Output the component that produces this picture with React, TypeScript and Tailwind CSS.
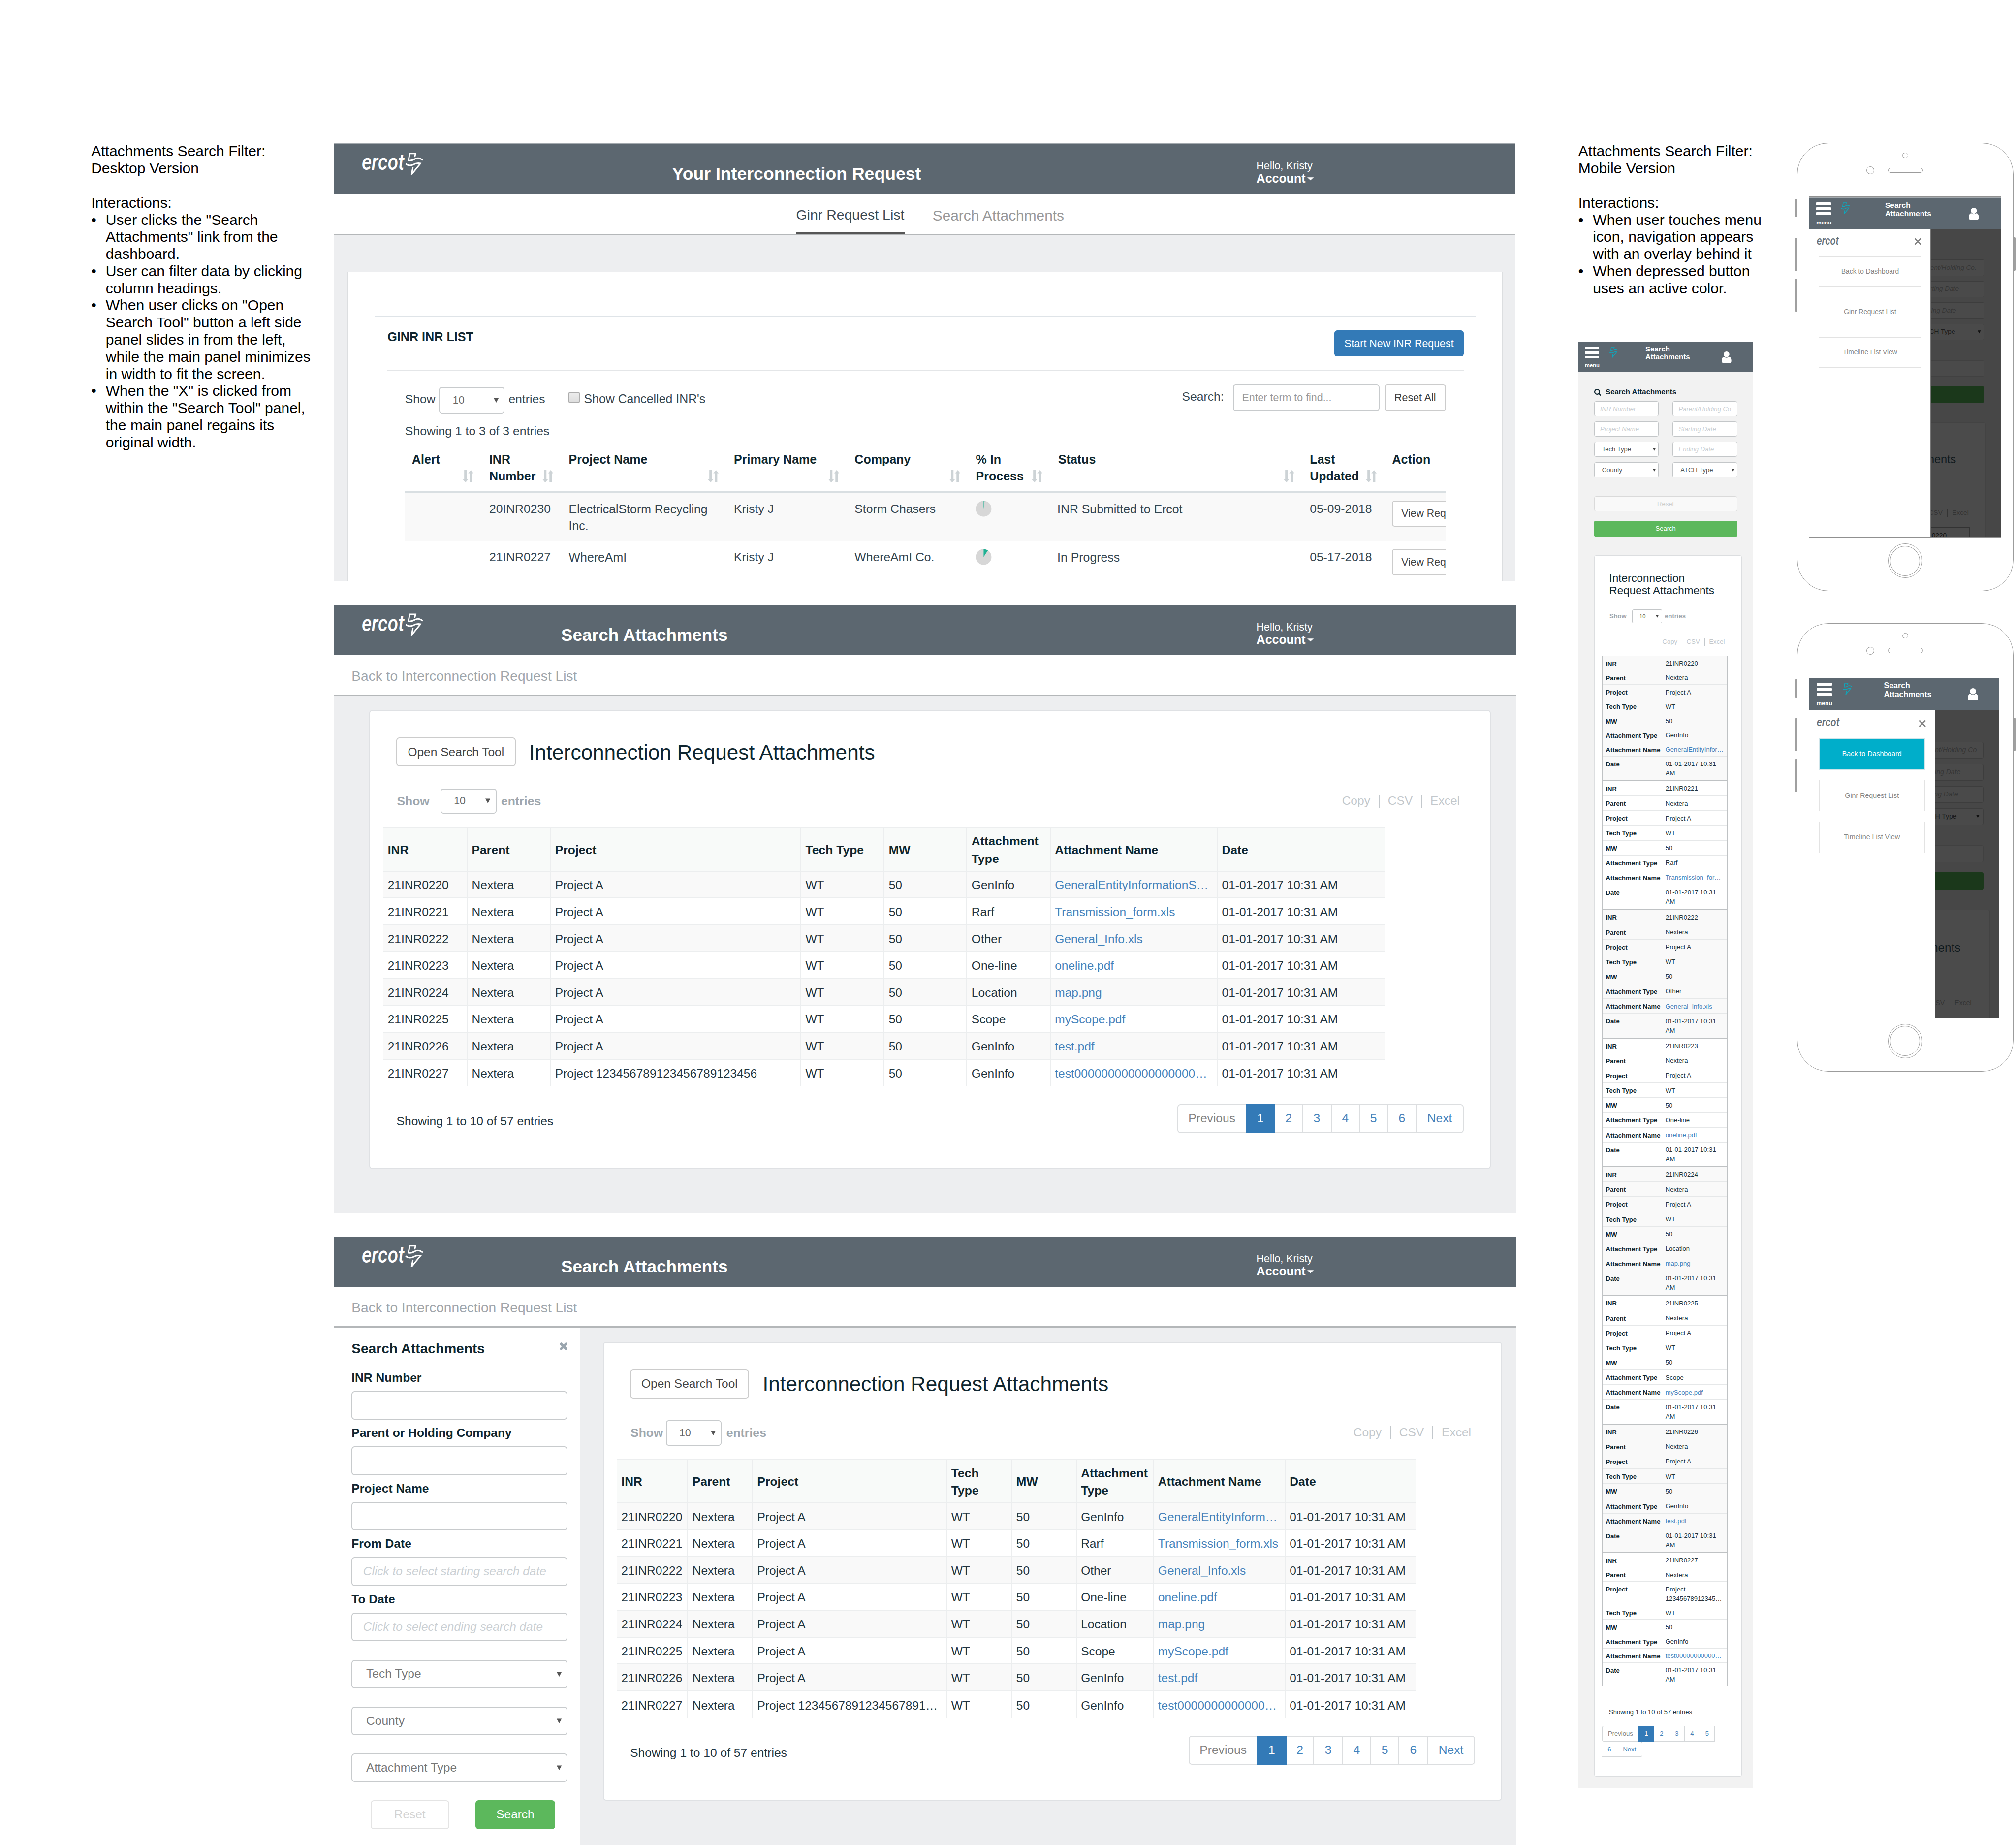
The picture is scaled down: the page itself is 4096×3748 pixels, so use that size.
import React from "react";

type Cls = { className?: string };

/* ---------- icons ---------- */

const Arrow = ({ className = "" }: Cls) => (
  <svg viewBox="0 0 12 12" className={`shrink-0 ${className}`} preserveAspectRatio="none">
    <path d="M0 0.5H12L6 11.5Z" fill="currentColor" />
  </svg>
);

const ErcotMark = ({ className = "" }: Cls) => (
  <svg viewBox="320 28 118 152" className={className} fill="none" stroke="currentColor" strokeWidth="9.5">
    <path d="M382 57L388 34H350L342 79C362 83 374 75 386 68C404 59 422 66 435 77" />
    <path d="M324 100C343 116 360 113 376 105C392 95 404 95 420 98L362 170L371 124" />
  </svg>
);

const ErcotWord = ({ className = "" }: Cls) => (
  <svg viewBox="0 0 94 42" className={`shrink-0 overflow-visible ${className}`}>
    <text
      x="0"
      y="36"
      textLength="92"
      lengthAdjust="spacingAndGlyphs"
      fontFamily="Roboto, sans-serif"
      fontStyle="italic"
      fontWeight="500"
      fontSize="49"
      fill="currentColor"
    >
      ercot
    </text>
  </svg>
);

const UserIcon = ({ className = "" }: Cls) => (
  <svg viewBox="0 128 1280 1536" className={className} fill="currentColor">
    <path d="M1280 1399q0 109-62.5 187t-150.5 78h-854q-88 0-150.5-78t-62.5-187q0-85 8.5-160.5t31.5-152 58.5-131 94-89 134.5-34.5q131 128 313 128t313-128q76 0 134.5 34.5t94 89 58.5 131 31.5 152 8.5 160.5zm-256-887q0 159-112.5 271.5t-271.5 112.5-271.5-112.5-112.5-271.5 112.5-271.5 271.5-112.5 271.5 112.5 112.5 271.5z" />
  </svg>
);

const TimesIcon = ({ className = "" }: Cls) => (
  <svg viewBox="302 366 1188 1188" className={className} fill="currentColor">
    <path d="M1490 1322q0 40-28 68l-136 136q-28 28-68 28t-68-28l-294-294-294 294q-28 28-68 28t-68-28l-136-136q-28-28-28-68t28-68l294-294-294-294q-28-28-28-68t28-68l136-136q28-28 68-28t68 28l294 294 294-294q28-28 68-28t68 28l136 136q28 28 28 68t-28 68l-294 294 294 294q28 28 28 68z" />
  </svg>
);

const SearchIcon = ({ className = "" }: Cls) => (
  <svg viewBox="64 128 1664 1664" className={className} fill="currentColor">
    <path d="M1216 832q0-185-131.5-316.5t-316.5-131.5-316.5 131.5-131.5 316.5 131.5 316.5 316.5 131.5 316.5-131.5 131.5-316.5zm512 832q0 52-38 90t-90 38q-54 0-90-38l-343-342q-179 124-399 124-143 0-273.5-55.5t-225-150-150-225-55.5-273.5 55.5-273.5 150-225 225-150 273.5-55.5 273.5 55.5 225 150 150 225 55.5 273.5q0 220-124 399l343 343q37 37 37 90z" />
  </svg>
);

const SortIcon = () => (
  <svg viewBox="0 0 24 27" className="h-[27px] w-[24px] shrink-0" fill="#cdd3d6">
    <path d="M3.4 0H8.8V20H12L6.1 27L0.4 20H3.4Z" />
    <path d="M15.2 27H20.6V7H23.6L17.9 0L12 7H15.2Z" />
  </svg>
);

const Pie = ({ wedge }: { wedge: string }) => (
  <svg viewBox="0 0 36 36" className="size-[35px]">
    <circle cx="18" cy="18" r="17.5" fill="#d7d7d7" />
    <path d={wedge} fill="#1fb193" />
  </svg>
);

/* ---------- notes ---------- */

function Notes({ title, items }: { title: string[]; items: string[][] }) {
  return (
    <div className="text-[32px] leading-[37px] whitespace-nowrap text-black">
      {title.map((t) => (
        <p key={t}>{t}</p>
      ))}
      <p className="mt-[37px]">Interactions:</p>
      <ul>
        {items.map((lines) => (
          <li key={lines[0]} className="flex">
            <span className="w-[31.5px] shrink-0">•</span>
            <div>
              {lines.map((l) => (
                <p key={l}>{l}</p>
              ))}
            </div>
          </li>
        ))}
      </ul>
    </div>
  );
}

/* ---------- desktop shared ---------- */

function Header({ title, cols, titleCls }: { title: string; cols: string; titleCls: string }) {
  return (
    <header className={`grid h-[108px] shrink-0 bg-[#5c6770] text-white ${cols}`}>
      <div className="flex pt-[9px] pl-[60px]">
        <ErcotWord className="mt-[11px] h-[42px] w-[94px]" />
        <ErcotMark className="mt-[9.3px] h-[50.6px] w-[39.3px] shrink-0" />
      </div>
      <h1 className={`leading-[44px] font-bold whitespace-nowrap ${titleCls}`}>{title}</h1>
      <div className="mt-[34px] h-[53px] w-[145px] border-r-[2.2px] border-white/90 pt-px leading-[26px] whitespace-nowrap">
        <p className="text-[22.8px]">Hello, Kristy</p>
        <p className="flex items-center text-[26.6px] font-bold">
          Account
          <Arrow className="mt-[3px] ml-[4px] h-[7px] w-[14px]" />
        </p>
      </div>
    </header>
  );
}

function Exports({ className = "", sep = "" }: Cls & { sep?: string }) {
  return (
    <div className={`flex items-center text-[#c3c8cc] ${className}`}>
      <span>Copy</span>
      <span className={`bg-[#c3c8cc] ${sep}`} />
      <span>CSV</span>
      <span className={`bg-[#c3c8cc] ${sep}`} />
      <span>Excel</span>
    </div>
  );
}

/* ---------- desktop: request list ---------- */

const listCols = "grid grid-cols-[167px_172px_357px_261px_262px_178px_544px_178px_1fr]";
const listHeads: [string[], boolean][] = [
  [["Alert"], true],
  [["INR", "Number"], true],
  [["Project Name"], true],
  [["Primary Name"], true],
  [["Company"], true],
  [["% In", "Process"], true],
  [["Status"], true],
  [["Last", "Updated"], true],
  [["Action"], false],
];
const listRows = [
  {
    inr: "20INR0230",
    project: ["ElectricalStorm Recycling", "Inc."],
    company: "Storm Chasers",
    wedge: "M18 18L18 0.5A17.5 17.5 0 0 1 20 0.7Z",
    status: "INR Submitted to Ercot",
    date: "05-09-2018",
    cls: "h-[105px] bg-[#f9f9f9] border-b-[2.2px] border-[#dfe2e4]",
  },
  {
    inr: "21INR0227",
    project: ["WhereAmI"],
    company: "WhereAmI Co.",
    wedge: "M18 18L18 0.5A17.5 17.5 0 0 1 27.5 3.3Z",
    status: "In Progress",
    date: "05-17-2018",
    cls: "h-[86px]",
  },
];

function RequestList() {
  return (
    <section className="flex h-[947.5px] w-[2553px] flex-col overflow-hidden border-t-[2.2px] border-[#a3a9ae] bg-[#edeef0]">
      <Header title="Your Interconnection Request" cols="grid-cols-[731px_1263px_1fr]" titleCls="pt-[43px] text-[37.9px]" />
      <nav className="flex h-[89px] shrink-0 border-b-[2.2px] border-[#b4b7b9] bg-white pl-[999px] leading-[40px] whitespace-nowrap">
        <span className="h-[87px] w-[235px] border-b-[6px] border-[#565656] pt-[26px] text-[30.3px] text-[#3a4a55]">
          Ginr Request List
        </span>
        <span className="ml-[60px] pt-[27px] text-[31.8px] text-[#999]">Search Attachments</span>
      </nav>
      <div className="mt-[79px] ml-[29.5px] w-[2498.5px] flex-1 border-r-[2.2px] border-l-[1px] border-[#dcdee0] bg-white pt-[95px] text-[26.3px] text-[#344550]">
        <div className="mx-[57px] border-t-[4px] border-[#dfe4e8]" />
        <div className="mr-[84px] ml-[85px] flex h-[117px] justify-between border-b-[2.2px] border-[#e4e6e8]">
          <h2 className="mt-[25px] text-[26.8px] leading-[36px] font-bold text-[#0f2630]">GINR INR LIST</h2>
          <button className="mt-[28.5px] h-[57px] w-[279px] rounded-[6px] bg-[#337ab7] text-[22.8px] text-white">
            Start New INR Request
          </button>
        </div>
        <div className="mr-[122px] ml-[123px]">
          <div className="flex items-start">
            <span className="mt-[43px] w-[74px] leading-[36px]">Show</span>
            <span className="mt-[34px] flex h-[57px] w-[141px] items-center justify-between rounded-[6px] border-[2.2px] border-[#c8cbcd] pr-[10px] pl-[27px] text-[22.8px] text-[#666]">
              10
              <Arrow className="size-[11px] text-[#555]" />
            </span>
            <span className="mt-[43px] ml-[9px] leading-[36px]">entries</span>
            <span className="mt-[45px] ml-[51px] size-[24px] rounded-[4px] border-[2.2px] border-[#adadad] bg-linear-to-b from-[#ededed] to-[#dedede]" />
            <span className="mt-[43px] ml-[9px] text-[26.5px] leading-[36px]">Show Cancelled INR's</span>
            <span className="mt-[37px] ml-auto leading-[36px]">Search:</span>
            <span className="mt-[29px] ml-[19px] flex h-[57px] w-[318px] items-center rounded-[6px] border-[2.2px] border-[#c8cbcd] pl-[18px] text-[22.8px] text-[#999]">
              Enter term to find...
            </span>
            <button className="mt-[29px] ml-[10px] h-[57px] w-[133px] rounded-[6px] border-[2.2px] border-[#ccc] text-[22.8px] text-[#3c3c3c]">
              Reset All
            </button>
          </div>
          <p className="mt-[21px] text-[26.4px] leading-[36px]">Showing 1 to 3 of 3 entries</p>
          <div className="overflow-hidden">
            <div
              className={`${listCols} h-[115px] border-b-[4px] border-[#d9dfe2] pt-[25.5px] text-[26.6px] leading-[36px] font-bold text-[#0f2630]`}
            >
              {listHeads.map(([lines, sort]) => (
                <div key={lines[0]} className="flex justify-between pr-[18px] pl-[15px] whitespace-nowrap">
                  <div>
                    {lines.map((l) => (
                      <p key={l}>{l}</p>
                    ))}
                  </div>
                  {sort && (
                    <div className="pt-[40px]">
                      <SortIcon />
                    </div>
                  )}
                </div>
              ))}
            </div>
            {listRows.map((r) => (
              <div key={r.inr} className={`${listCols} overflow-hidden pt-[16.5px] leading-[37px] whitespace-nowrap ${r.cls}`}>
                <span />
                <span className="pl-[15px]">{r.inr}</span>
                <div className="pl-[15px] text-[26.5px]">
                  {r.project.map((l) => (
                    <p key={l}>{l}</p>
                  ))}
                </div>
                <span className="pl-[15px]">Kristy J</span>
                <span className="pl-[15px]">{r.company}</span>
                <div className="pl-[14px]">
                  <Pie wedge={r.wedge} />
                </div>
                <span className="pl-[13px] text-[26.5px]">{r.status}</span>
                <span className="pl-[15px]">{r.date}</span>
                <div className="overflow-hidden pl-[15px]">
                  <button className="h-[57px] w-[220px] rounded-[6px] border-[2.2px] border-[#ccc] bg-white pl-[18px] text-left text-[22.6px] text-[#444]">
                    View Request
                  </button>
                </div>
              </div>
            ))}
          </div>
        </div>
      </div>
    </section>
  );
}

/* ---------- desktop: attachments ---------- */

const files: [string, string, string, string][] = [
  ["21INR0220", "GenInfo", "GeneralEntityInformationS…", "GeneralEntityInform…"],
  ["21INR0221", "Rarf", "Transmission_form.xls", "Transmission_form.xls"],
  ["21INR0222", "Other", "General_Info.xls", "General_Info.xls"],
  ["21INR0223", "One-line", "oneline.pdf", "oneline.pdf"],
  ["21INR0224", "Location", "map.png", "map.png"],
  ["21INR0225", "Scope", "myScope.pdf", "myScope.pdf"],
  ["21INR0226", "GenInfo", "test.pdf", "test.pdf"],
  ["21INR0227", "GenInfo", "test000000000000000000…", "test0000000000000…"],
];

function Pagination() {
  const cell = "flex h-full items-center justify-center border-r-[2.2px] border-[#dcdee0]";
  return (
    <div className="flex h-[63px] rounded-[7px] border-[2.2px] border-[#dcdee0] text-[26.2px] text-[#4482bb]">
      <span className="flex w-[146px] items-center justify-center text-[#828282]">Previous</span>
      <span className="-my-[2.2px] flex w-[64px] items-center justify-center bg-[#337ab7] text-white">1</span>
      <span className={`${cell} w-[60px]`}>2</span>
      <span className={`${cell} w-[62px]`}>3</span>
      <span className={`${cell} w-[61px]`}>4</span>
      <span className={`${cell} w-[61px]`}>5</span>
      <span className={`${cell} w-[62px]`}>6</span>
      <span className="flex w-[99px] items-center justify-center">Next</span>
    </div>
  );
}

function AttachmentsCard({
  cardCls,
  cols,
  tableCls,
  showCls,
  compact,
}: {
  cardCls: string;
  cols: string;
  tableCls: string;
  showCls: string;
  compact: boolean;
}) {
  const heads = [["INR"], ["Parent"], ["Project"], compact ? ["Tech", "Type"] : ["Tech Type"], ["MW"], ["Attachment", "Type"], ["Attachment Name"], ["Date"]];
  return (
    <div
      className={`h-[992.5px] shrink-0 rounded-[7px] border-[2.2px] border-[#dfe1e4] bg-white pt-[57.5px] text-[26.1px] text-[#22343e] ${cardCls}`}
    >
      <div className="flex items-center pl-[56.5px] whitespace-nowrap">
        <button className="h-[63px] w-[258px] rounded-[7px] border-[2.2px] border-[#ccc] pt-px text-[#444]">Open Search Tool</button>
        <h2 className="ml-[29px] pt-px text-[45px] leading-[50px] text-[#0f2630]">Interconnection Request Attachments</h2>
      </div>
      <div className="mt-[47px] flex h-[55px] items-center pr-[65px] pl-[58px]">
        <span className={`text-[26.4px] font-bold text-[#9fa7ae] ${showCls}`}>Show</span>
        <span className="flex h-[55px] w-[121px] items-center justify-between rounded-[6px] border-[2.2px] border-[#c8cbcd] pr-[11px] pl-[27px] text-[22.8px] text-[#666]">
          10
          <Arrow className="size-[11px] text-[#555]" />
        </span>
        <span className="ml-[10px] text-[26.4px] font-bold text-[#9fa7ae]">entries</span>
        <Exports className="ml-auto" sep="mx-[18px] h-[29px] w-[2.2px]" />
      </div>
      <div className={`mt-[29px] ml-[28px] ${tableCls}`}>
        <div className={`grid ${cols} h-[96px] border-t-[2.2px] border-b-[2.2px] border-[#eceeef] bg-[#f8faf9]`}>
          {heads.map((lines, i) => (
            <div
              key={i}
              className={`flex flex-col justify-center pt-[2px] text-[26.3px] leading-[37.5px] font-bold whitespace-nowrap text-[#0f2630] ${i ? "border-l-[2.2px] border-[#eceeef] pl-[9px]" : "pl-[10px]"}`}
            >
              {lines.map((l) => (
                <p key={l}>{l}</p>
              ))}
            </div>
          ))}
        </div>
        {files.map(([inr, type, long, short], r) => {
          const last = r === files.length - 1;
          const project = !last ? "Project A" : compact ? "Project 1234567891234567891…" : "Project 123456789123456789123456";
          const vals = [inr, "Nextera", project, "WT", "50", type, compact ? short : long, "01-01-2017 10:31 AM"];
          return (
            <div
              key={inr}
              className={`grid ${cols} h-[58.05px] ${r % 2 ? "bg-white" : "bg-[#f9f9f9]"} ${last ? "" : "border-b-[2.2px] border-[#eceeef]"}`}
            >
              {vals.map((v, i) => (
                <span
                  key={i}
                  className={`flex items-center pt-[4px] whitespace-nowrap ${i ? "border-l-[2.2px] border-[#eceeef] pl-[9px]" : "pl-[10px]"} ${i === 6 ? "text-[#4482bb]" : ""}`}
                >
                  {v}
                </span>
              ))}
            </div>
          );
        })}
      </div>
      <div className="mt-[38px] flex items-start justify-between pr-[57px] pl-[57px]">
        <p className="mt-[19px] text-[26.2px] leading-[36px]">Showing 1 to 10 of 57 entries</p>
        <Pagination />
      </div>
    </div>
  );
}

function AttachmentsNav() {
  return (
    <nav className="h-[89px] shrink-0 border-b-[3.3px] border-[#b4b7b9] bg-white pt-[26px] pl-[38px] text-[29.95px] leading-[40px] text-[#a0a6ac]">
      Back to Interconnection Request List
    </nav>
  );
}

function AttachmentsWide() {
  return (
    <section className="mt-[51.5px] flex h-[1314px] flex-col bg-[#edeef0]">
      <Header title="Search Attachments" cols="grid-cols-[491px_1503px_1fr]" titleCls="pt-[42px] text-[37.4px]" />
      <AttachmentsNav />
      <AttachmentsCard
        cardCls="mt-[29.5px] ml-[76px] w-[2425px]"
        tableCls="w-[2166px]"
        showCls="w-[94px]"
        cols="grid-cols-[180.7px_180px_541.3px_180px_179px_180.2px_361px_1fr]"
        compact={false}
      />
    </section>
  );
}

const sideInputs: [string, string][] = [
  ["INR Number", ""],
  ["Parent or Holding Company", ""],
  ["Project Name", ""],
  ["From Date", "Click to select starting search date"],
  ["To Date", "Click to select ending search date"],
];

function SearchSidebar() {
  return (
    <aside className="flex w-[533px] shrink-0 flex-col bg-white pt-[25px] pr-[28px] pl-[38px] text-[26px]">
      <div className="flex h-[40px] items-center justify-between">
        <h2 className="text-[29.9px] font-bold whitespace-nowrap text-[#0f2630]">Search Attachments</h2>
        <TimesIcon className="mb-[9px] size-[17px] text-[#9aa5ae]" />
      </div>
      <div className="mt-[25px] flex flex-col gap-[10.7px]">
        {sideInputs.map(([label, ph]) => (
          <label key={label} className="flex flex-col gap-[10.7px]">
            <span className="text-[26.2px] leading-[36px] font-bold text-[#0f2630]">{label}</span>
            <span className="flex h-[62.3px] items-center rounded-[7px] border-[2.2px] border-[#c8cbcd] pl-[23px] whitespace-nowrap text-[#cbd0d4] italic">
              {ph}
            </span>
          </label>
        ))}
      </div>
      <div className="mt-[40px] flex flex-col gap-[39.2px]">
        {["Tech Type", "County", "Attachment Type"].map((s) => (
          <span
            key={s}
            className="flex h-[62px] items-center justify-between rounded-[7px] border-[2.2px] border-[#c8cbcd] pr-[11px] pl-[29.5px] text-[26.2px] text-[#777]"
          >
            {s}
            <Arrow className="size-[11px] text-[#555]" />
          </span>
        ))}
      </div>
      <div className="mt-[39px] flex justify-between pr-[27px] pl-[41px]">
        <button className="h-[63px] w-[170px] rounded-[7px] border-[2.2px] border-[#e4e4e4] text-[#d3d3d3]">Reset</button>
        <button className="h-[63px] w-[172px] rounded-[7px] bg-[#5cb85c] text-white">Search</button>
      </div>
    </aside>
  );
}

function AttachmentsWithSidebar() {
  return (
    <section className="mt-[51px] flex flex-1 flex-col bg-[#edeef0]">
      <Header title="Search Attachments" cols="grid-cols-[491px_1503px_1fr]" titleCls="pt-[42px] text-[37.4px]" />
      <AttachmentsNav />
      <div className="flex flex-1">
        <SearchSidebar />
        <AttachmentsCard
          cardCls="mt-[30px] ml-[48px] w-[1944.5px]"
          tableCls="w-[1727px]"
          showCls="w-[76px]"
          cols="grid-cols-[152.6px_140.1px_419.5px_140.5px_139.8px_166.7px_284.5px_1fr]"
          compact
        />
      </div>
    </section>
  );
}

/* ---------- mobile ---------- */

function MobileHeader({ cols }: { cols: string }) {
  return (
    <header className={`grid h-[65.6px] shrink-0 border-t border-[#a3a9ae] bg-[#5c6770] font-bold text-white ${cols}`}>
      <div className="flex flex-col pt-[9px] pl-[14px]">
        <div className="flex w-[31px] flex-col gap-[4.7px]">
          <span className="h-[5.6px] rounded-[1px] bg-white" />
          <span className="h-[5.6px] rounded-[1px] bg-white" />
          <span className="h-[5.6px] rounded-[1px] bg-white" />
        </div>
        <span className="mt-[7px] text-[12px] leading-[16px]">menu</span>
      </div>
      <ErcotMark className="mt-[9px] h-[25.5px] w-[20px] text-[#10a5ba]" />
      <p className="pt-[6px] text-[15.9px] leading-[17.4px]">
        Search
        <br />
        Attachments
      </p>
      <UserIcon className="mt-[20px] h-[25px] w-[21px]" />
    </header>
  );
}

const mInput = "flex h-[33px] items-center rounded-[4px] border border-[#c4c7c9] bg-white whitespace-nowrap";

function MobileField({ text, select }: { text: string; select?: boolean }) {
  return select ? (
    <span className={`${mInput} justify-between pt-px pr-[5px] pl-[16px] text-[#555]`}>
      {text}
      <Arrow className="size-[6.5px] text-[#444]" />
    </span>
  ) : (
    <span className={`${mInput} pt-px pl-[12px] text-[#cbd0d4] italic`}>{text}</span>
  );
}

const mobileNames = [
  "GeneralEntityInfor…",
  "Transmission_for…",
  "General_Info.xls",
  "oneline.pdf",
  "map.png",
  "myScope.pdf",
  "test.pdf",
  "test00000000000…",
];

function MobileGroup({ index }: { index: number }) {
  const [inr, type] = files[index];
  const first = index === 0;
  const last = index === 7;
  const rows: [string, string][] = [
    ["INR", inr],
    ["Parent", "Nextera"],
    ["Project", last ? "Project 12345678912345…" : "Project A"],
    ["Tech Type", "WT"],
    ["MW", "50"],
    ["Attachment Type", type],
    ["Attachment Name", mobileNames[index]],
    ["Date", "01-01-2017 10:31 AM"],
  ];
  const groupH = first ? "h-[269.4px] border-t-[1.2px]" : last ? "h-[290.5px] border-t-[2.2px] border-b-[1.2px]" : "h-[278.07px] border-t-[2.2px]";
  const rowH = first || last ? "h-[31.05px]" : "h-[32.1px]";
  return (
    <div className={`flex flex-col border-x-[1.2px] border-[#bfc2c4] ${groupH} ${index % 2 ? "bg-white" : "bg-[#f9f9f9]"}`}>
      {rows.map(([k, v], i) => (
        <div
          key={k}
          className={`grid shrink-0 grid-cols-[129px_1fr] gap-0 pt-[7.5px] pl-[7px] leading-[20px] ${
            i === 7 ? "flex-1" : `border-b border-[#e6e8e9] ${last && i === 2 ? "h-[51px]" : rowH}`
          }`}
        >
          <span className="font-bold whitespace-nowrap text-[#0f2630]">{k}</span>
          <span className={`-mt-[0.7px] w-[130px] ${i === 6 ? "text-[#4482bb]" : ""}`}>{v}</span>
        </div>
      ))}
    </div>
  );
}

function MobilePage() {
  const pg = "flex items-center justify-center border-y border-r border-[#d5d8da]";
  return (
    <section className="mt-[96.7px] flex h-[3126px] w-[377px] flex-col bg-[#f2f2f2] text-[13.9px] text-[#22343e]">
      <MobileHeader cols="grid-cols-[66px_79px_165px_1fr]" />
      <div className="mt-[32.5px] flex items-center pl-[34px] text-[15.9px] leading-[22px] font-bold text-[#0f2630]">
        <SearchIcon className="mr-[10px] size-[15px]" />
        Search Attachments
      </div>
      <div className="mt-[8px] ml-[34px] grid w-[309.5px] grid-cols-2 gap-x-[30px] gap-y-[11px]">
        <MobileField text="INR Number" />
        <MobileField text="Parent/Holding Co" />
        <MobileField text="Project Name" />
        <MobileField text="Starting Date" />
        <MobileField text="Tech Type" select />
        <MobileField text="Ending Date" />
        <MobileField text="County" select />
        <MobileField text="ATCH Type" select />
      </div>
      <button className="mt-[41px] ml-[34px] h-[33px] w-[309.5px] shrink-0 rounded-[4px] border border-[#dadada] bg-[#f9f9f9] text-[#ccc]">
        Reset
      </button>
      <button className="mt-[20px] ml-[34px] h-[34px] w-[309.5px] shrink-0 rounded-[3px] bg-[#5cb85c] text-white">Search</button>
      <div className="mt-[41px] ml-[34.7px] h-[2639px] w-[319px] shrink-0 rounded-[4px] border border-[#dcdee0] bg-white pt-[36px] pl-[15.5px]">
        <h2 className="pl-[15.5px] text-[23.9px] leading-[26px] whitespace-nowrap text-[#0f2630]">
          Interconnection
          <br />
          Request Attachments
        </h2>
        <div className="mt-[27.5px] flex h-[29.3px] items-center pl-[16px] font-bold text-[#9fa7ae]">
          <span className="w-[49px]">Show</span>
          <span className="flex h-[29.3px] w-[64.5px] items-center justify-between rounded-[3px] border border-[#c4c7c9] pt-px pr-[6px] pl-[15px] text-[12px] font-normal text-[#555]">
            10
            <Arrow className="size-[6.5px] text-[#444]" />
          </span>
          <span className="ml-[6px]">entries</span>
        </div>
        <Exports className="mt-[31.5px] ml-[130.5px] leading-[20px]" sep="mx-[9.5px] h-[16px] w-px" />
        <div className="mt-[19px] w-[271.4px]">
          {files.map((f, i) => (
            <MobileGroup key={f[0]} index={i} />
          ))}
        </div>
        <p className="mt-[46px] pl-[15px] leading-[20px]">Showing 1 to 10 of 57 entries</p>
        <div className="mt-[19px] flex h-[34px] text-[#4482bb]">
          <span className="flex w-[78.7px] items-center justify-center rounded-l-[4px] border border-r-0 border-[#d5d8da] text-[#828282]">
            Previous
          </span>
          <span className="flex w-[34px] items-center justify-center bg-[#337ab7] text-white">1</span>
          <span className={`${pg} w-[33px]`}>2</span>
          <span className={`${pg} w-[33px]`}>3</span>
          <span className={`${pg} w-[33px]`}>4</span>
          <span className={`${pg} w-[32px]`}>5</span>
        </div>
        <div className="-ml-px flex h-[33.5px] text-[#4482bb]">
          <span className={`${pg} w-[34px] border-l`}>6</span>
          <span className={`${pg} w-[54px] rounded-r-[4px]`}>Next</span>
        </div>
      </div>
    </section>
  );
}

/* ---------- phones ---------- */

type Dim = {
  holding: string;
  fields: string;
  p1: string;
  p2: string;
  p3: string;
  arrow: string;
  button: string;
  card: string;
  title: string;
  exports: string;
  table: string;
};

const dimWide: Dim = {
  holding: "Parent/Holding Co.",
  fields: "pr-[35px]",
  p1: "pr-[16px]",
  p2: "pr-[54px]",
  p3: "pr-[60px]",
  arrow: "ml-[48px]",
  button: "mr-[35px]",
  card: "mr-[31px]",
  title: "pr-[64px]",
  exports: "pr-[37px]",
  table: "mr-[35px]",
};

const dimNarrow: Dim = {
  holding: "Parent/Holding Co",
  fields: "pr-[33px]",
  p1: "pr-[13px]",
  p2: "pr-[47px]",
  p3: "pr-[52px]",
  arrow: "ml-[41px]",
  button: "mr-[33px]",
  card: "mr-[19px]",
  title: "pr-[61px]",
  exports: "pr-[38px]",
  table: "mr-[36px]",
};

const dimInput =
  "-ml-[44px] flex h-[35.4px] w-[160px] shrink-0 items-center justify-end rounded-[4px] border border-[#3d3d3d] bg-[#4a4a4a] whitespace-nowrap";

function DimmedPage({ dim }: { dim: Dim }) {
  return (
    <div className="flex min-w-0 flex-1 flex-col overflow-hidden border-l border-[#777] bg-[#474747] pt-[65.7px] text-[14.5px]">
      <div className={`flex flex-col gap-[11px] self-end ${dim.fields}`}>
        <span className={`${dimInput} text-[#363636] italic ${dim.p1}`}>{dim.holding}</span>
        <span className={`${dimInput} text-[#363636] italic ${dim.p2}`}>Starting Date</span>
        <span className={`${dimInput} text-[#363636] italic ${dim.p3}`}>Ending Date</span>
        <span className={`${dimInput} pr-[7px] text-[#1c1c1c]`}>
          ATCH Type
          <Arrow className={`size-[7px] text-[#111] ${dim.arrow}`} />
        </span>
      </div>
      <div className={`mt-[43px] h-[35.4px] w-[160px] shrink-0 self-end rounded-[4px] border border-[#414141] bg-[#4a4a4a] ${dim.button}`} />
      <div className={`mt-[21.4px] h-[35.4px] w-[160px] shrink-0 self-end rounded-[4px] bg-[#1b381b] ${dim.button}`} />
      <div className={`mt-[42.7px] flex w-[160px] flex-1 flex-col self-end rounded-t-[4px] border border-[#434343] bg-[#4b4b4b] ${dim.card}`}>
        <p className={`mt-[65px] flex justify-end text-[25px] leading-[27px] text-[#101a1f] ${dim.title}`}>Attachments</p>
        <div className={`mt-[92.5px] flex items-center justify-end leading-[20px] text-[#343434] ${dim.exports}`}>
          <span>CSV</span>
          <span className="mx-[10px] h-[16px] w-px bg-[#343434]" />
          <span>Excel</span>
        </div>
        <div className={`mt-[21px] h-[40px] border-t border-r border-[#333] pt-[7px] pr-[69px] text-right leading-[20px] text-[#111] ${dim.table}`}>
          21INR0220
        </div>
      </div>
    </div>
  );
}

function Phone({
  className = "",
  screenCls,
  headCols,
  menuCls,
  activeIndex,
  dim,
}: Cls & { screenCls: string; headCols: string; menuCls: string; activeIndex: number; dim: Dim }) {
  return (
    <div className={`relative w-[478px] shrink-0 px-[4.7px] ${className}`}>
      <span className="absolute top-[121px] left-0 h-[39px] w-[5px] rounded-l-[2px] bg-[#a0a0a0]" />
      <span className="absolute top-[205px] left-0 h-[72px] w-[5px] rounded-l-[2px] bg-[#a0a0a0]" />
      <span className="absolute top-[293px] left-0 h-[72px] w-[5px] rounded-l-[2px] bg-[#a0a0a0]" />
      <span className="absolute top-[204px] left-[472.5px] h-[72px] w-[5px] rounded-r-[2px] bg-[#a0a0a0]" />
      <div className="h-[969.2px] w-[468px] rounded-[68px] border-[1.2px] border-[#9c9c9c] bg-white pt-[20px]">
        <div className="mx-auto size-[12px] rounded-full border-[1.2px] border-[#9c9c9c]" />
        <div className="mt-[17.5px] flex h-[17px] items-center pl-[149px]">
          <span className="size-[17px] rounded-full border-[1.2px] border-[#9c9c9c]" />
          <span className="ml-[29.5px] h-[11px] w-[76px] rounded-full border-[1.2px] border-[#9c9c9c]" />
        </div>
        <div className="mt-[48.5px] ml-[25px] h-[737px] w-[415.5px] overflow-hidden border-[1.2px] border-[#909090]">
          <div className={`flex flex-col ${screenCls}`}>
            <div className="mt-px [zoom:1.04]">
              <MobileHeader cols={headCols} />
            </div>
            <div className="flex min-h-0 flex-1">
              <div className={`shrink-0 bg-white ${menuCls}`}>
                <div className="flex h-[58.5px] items-start justify-between pt-[10px] pr-[18.5px] pl-[15px]">
                  <ErcotWord className="mt-[4px] h-[21.9px] w-[49px] text-[#66717a]" />
                  <svg viewBox="0 0 16 16" className="mt-[9px] size-[16px]" fill="none" stroke="#858585" strokeWidth="3">
                    <path d="M1.5 1.5L14.5 14.5M14.5 1.5L1.5 14.5" />
                  </svg>
                </div>
                <div className="ml-[20px] flex w-[222px] flex-col gap-[21.4px]">
                  {["Back to Dashboard", "Ginr Request List", "Timeline List View"].map((t, i) => (
                    <span
                      key={t}
                      className={`flex h-[66px] items-center justify-center border-[1.5px] text-[14.7px] ${
                        i === activeIndex ? "border-[#cfe5ea] bg-[#00aeca] text-white" : "border-[#e3e3e3] text-[#888]"
                      }`}
                    >
                      {t}
                    </span>
                  ))}
                </div>
              </div>
              <DimmedPage dim={dim} />
            </div>
          </div>
        </div>
        <div className="mx-auto mt-[12.5px] flex size-[75px] items-center justify-center rounded-full border-[1.2px] border-[#9c9c9c]">
          <span className="size-[65px] rounded-full border-[1.2px] border-[#9c9c9c]" />
        </div>
      </div>
    </div>
  );
}

/* ---------- canvas ---------- */

export default function App() {
  return (
    <main className="flex h-[3987.5px] w-[4358px] overflow-hidden bg-white pt-[309px] font-['Liberation_Sans',Arial,sans-serif] [zoom:0.93985]">
      <div className="ml-[197px] w-[525px] shrink-0">
        <Notes
          title={["Attachments Search Filter:", "Desktop Version"]}
          items={[
            ['User clicks the "Search', 'Attachments" link from the', "dashboard."],
            ["User can filter data by clicking", "column headings."],
            [
              'When user clicks on "Open',
              'Search Tool" button a left side',
              "panel slides in from the left,",
              "while the main panel minimizes",
              "in width to fit the screen.",
            ],
            ['When the "X" is clicked from', 'within the "Search Tool" panel,', "the main panel regains its", "original width."],
          ]}
        />
      </div>
      <div className="flex w-[2555px] shrink-0 flex-col">
        <RequestList />
        <AttachmentsWide />
        <AttachmentsWithSidebar />
      </div>
      <div className="ml-[135px] w-[377px] shrink-0">
        <Notes
          title={["Attachments Search Filter:", "Mobile Version"]}
          items={[
            ["When user touches menu", "icon, navigation appears", "with an overlay behind it"],
            ["When depressed button", "uses an active color."],
          ]}
        />
        <MobilePage />
      </div>
      <div className="ml-[91px] flex w-[478px] shrink-0 flex-col">
        <Phone
          screenCls="h-[736px] w-[413px]"
          headCols="grid-cols-[65px_92px_174px_1fr]"
          menuCls="w-[261px]"
          activeIndex={-1}
          dim={dimWide}
        />
        <Phone
          className="mt-[69px]"
          screenCls="h-[714px] w-[398px] [zoom:1.03]"
          headCols="grid-cols-[66px_84px_169px_1fr]"
          menuCls="w-[263px]"
          activeIndex={0}
          dim={dimNarrow}
        />
      </div>
    </main>
  );
}
